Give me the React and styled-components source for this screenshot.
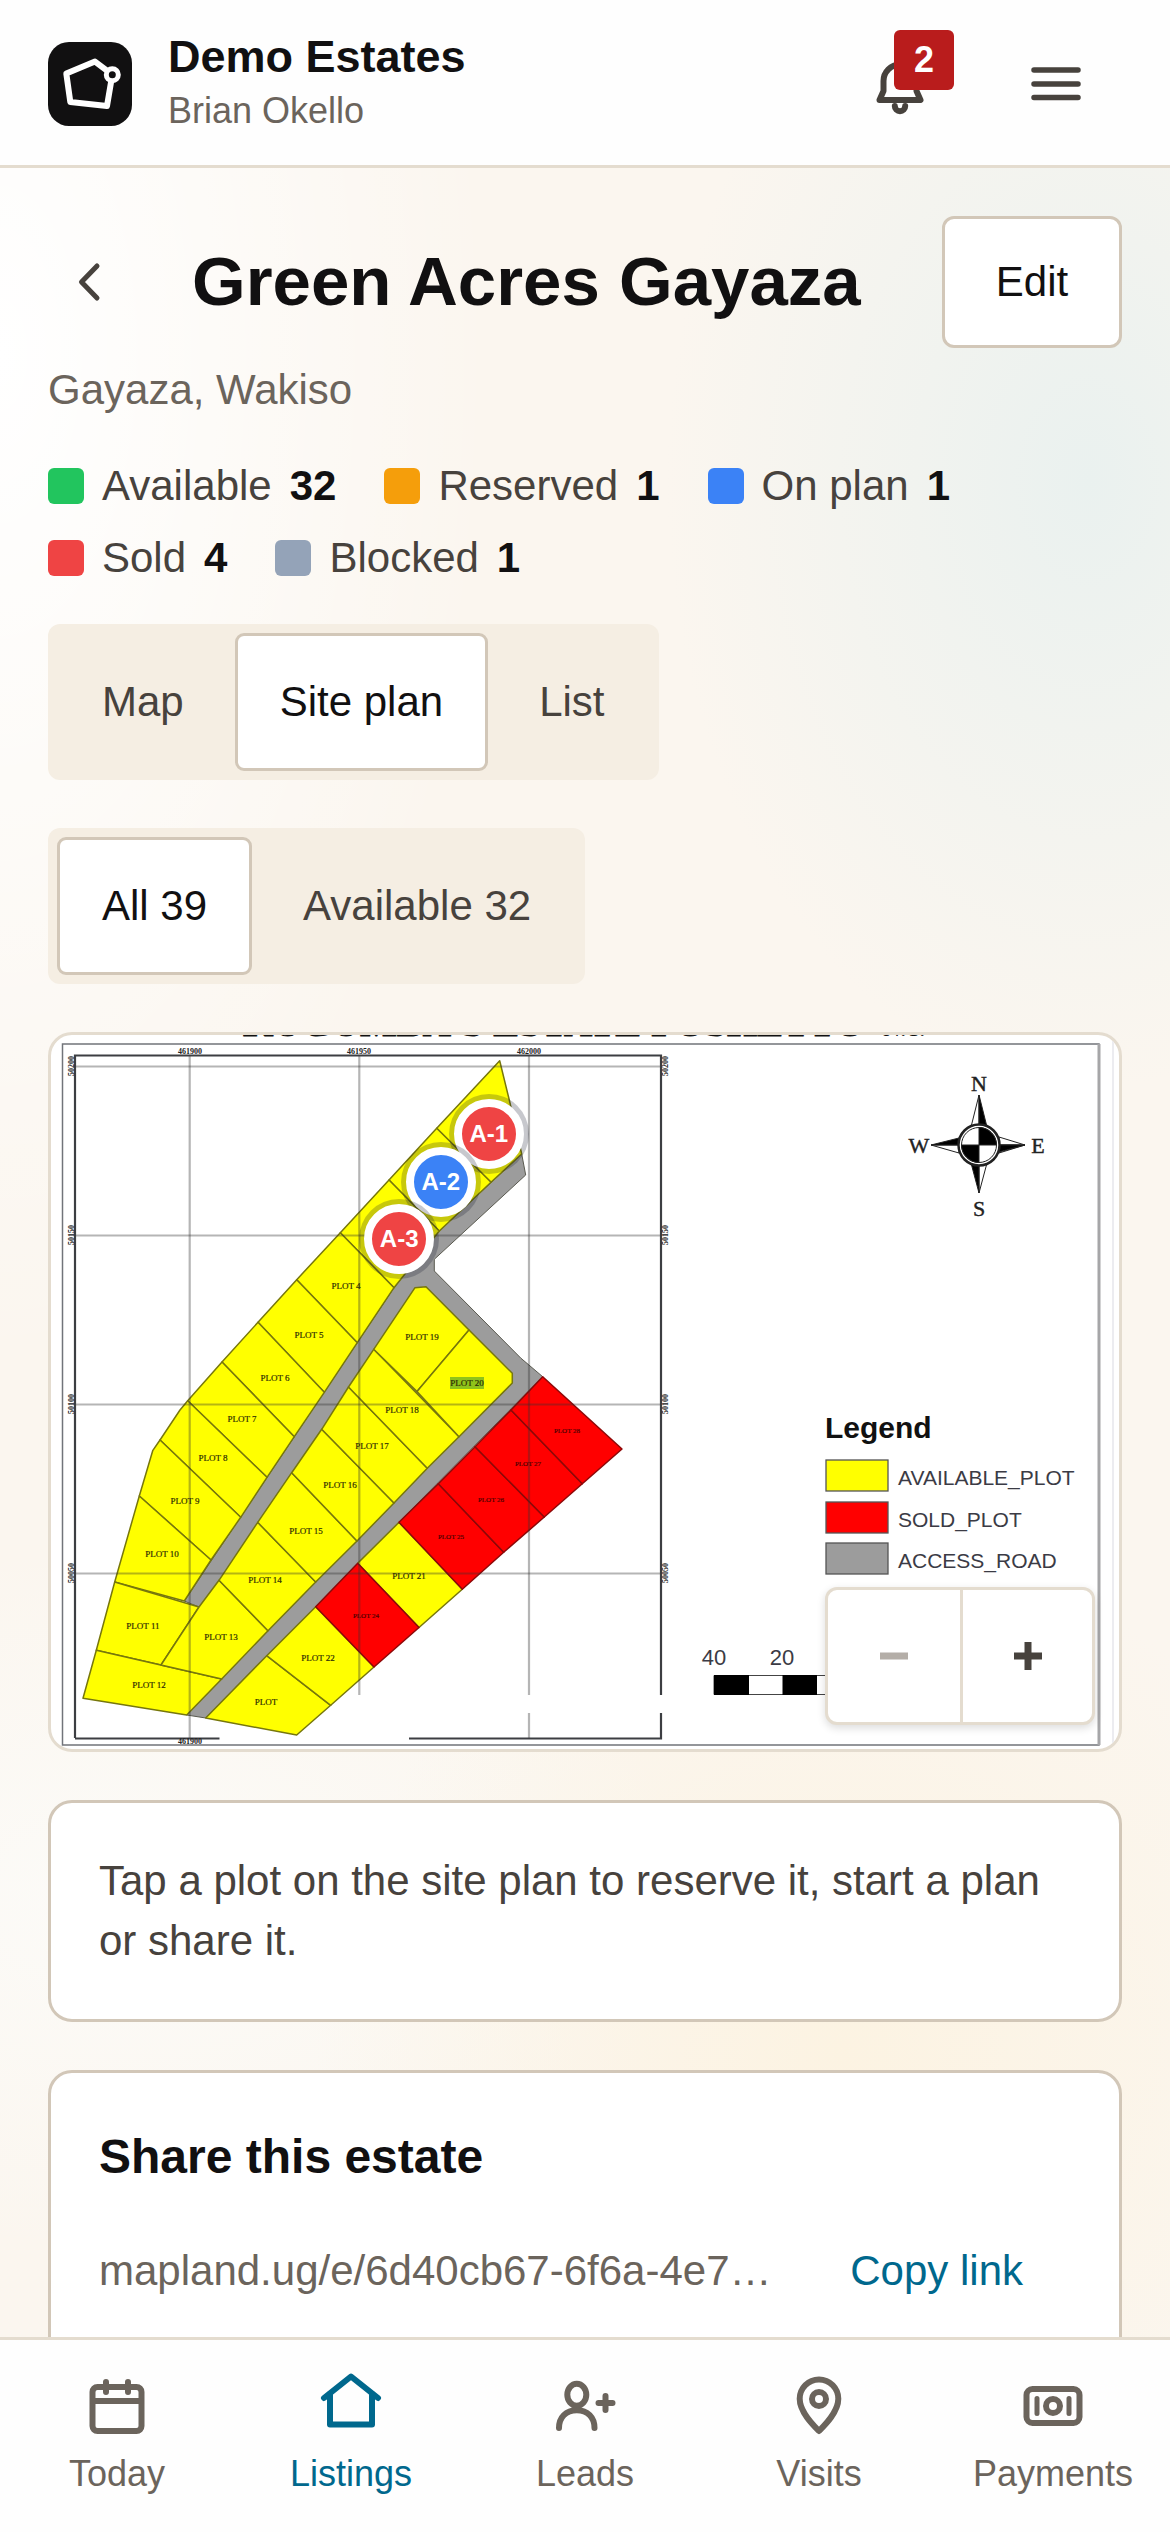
import React, { useState } from 'react'
import styled, { createGlobalStyle } from 'styled-components'

const colors = {
  ink: '#111011',
  text: '#47423d',
  muted: '#6b645c',
  link: '#00688d',
  line: '#e4dccf',
  cardLine: '#d2c7b8',
  sand: '#f5eee3',
  danger: '#b91c1c',
}

const GlobalStyle = createGlobalStyle`
  * { box-sizing: border-box; }
  body {
    margin: 0;
    background: #fbf7f0;
    color: ${colors.ink};
    font-family: "Liberation Sans", Arial, sans-serif;
    font-size: 42px;
    line-height: 60px;
  }
  button { font: inherit; color: inherit; cursor: pointer; }
  h1, h2, p, ul { margin: 0; padding: 0; }
`

// Data
const statuses = [
  { label: 'Available', count: 32, color: '#22c55e' },
  { label: 'Reserved', count: 1, color: '#f59e0b' },
  { label: 'On plan', count: 1, color: '#3b82f6' },
  { label: 'Sold', count: 4, color: '#ef4444' },
  { label: 'Blocked', count: 1, color: '#94a3b8' },
]

const markers = [
  { label: 'A-1', x: 41, y: 13.9, color: '#ef4444' },
  { label: 'A-2', x: 36.5, y: 20.6, color: '#3b82f6' },
  { label: 'A-3', x: 32.6, y: 28.6, color: '#ef4444' },
]

const yellowPlots = [
  '448.7,25.7 458.3,65 470.7,119 440,147.3 385.7,93.3',
  '385.7,93.3 440,147.3 388.3,196 338,145',
  '338,145 388.3,196 343,252.7 289.3,197.7',
  '289.3,197.7 343,252.7 306.3,307.7 245.7,244.7',
  '245.7,244.7 306.3,307.7 273.3,357.3 207,287.3',
  '207,287.3 273.3,357.3 243.3,401.7 171,327',
  '171,327 243.3,401.7 216,442.3 136.7,365.7',
  '136.7,365.7 216,442.3 189.7,482.3 109,405 129,375',
  '109,405 189.7,482.3 160,525 88.3,461 101.7,415.7',
  '88.3,461 160,525 133.3,566 63.7,547',
  '63.7,547 148,572 110,630 45.3,615.3',
  '45.3,615.3 170.7,644 135.7,680 32,663.3',
  '148,572 168,545.3 217,595.7 170.7,644 110,630',
  '168,545.3 206.7,487.3 264.7,547 217,595.7',
  '206.7,487.3 240.7,437.7 306,506 264.7,547',
  '240.7,437.7 270.7,394.3 343,468 306,506',
  '270.7,394.3 297.5,352 376.3,433.3 343,468',
  '297.5,352 322.7,314.3 408,401.7 376.3,433.3',
  '322.7,314.3 364,252.7 375,251.7 418,295 366,356.5',
  '418,295 461.3,338.3 461.3,348 408,401.7 366,356.5',
  '154.7,683 215.7,620.7 279.7,670.3 245.7,700',
  '215.7,620.7 264.7,571.7 323,632 279.7,670.3',
  '306.7,528.3 348,487.3 411.3,554.3 368,592.5',
]

const redPlots = [
  '264.7,571.7 306.7,528.3 368,592.5 323,632',
  '348,487.3 387.3,448.7 452.7,517.3 411.3,554.3',
  '387.3,448.7 424,411.7 493.3,482 452.7,517.3',
  '424,411.7 460,375 531.3,448.7 493.3,482',
  '460,375 491.7,341.7 571,414 531.3,448.7',
]

const plotLabels = [
  ['PLOT 4', 295, 254], ['PLOT 5', 258, 303], ['PLOT 6', 224, 346], ['PLOT 7', 191, 387],
  ['PLOT 8', 162, 426], ['PLOT 9', 134, 469], ['PLOT 10', 111, 522], ['PLOT 11', 92, 594],
  ['PLOT 12', 98, 653], ['PLOT 13', 170, 605], ['PLOT 14', 214, 548], ['PLOT 15', 255, 499],
  ['PLOT 16', 289, 453], ['PLOT 17', 321, 414], ['PLOT 18', 351, 378], ['PLOT 19', 371, 305],
  ['PLOT 20', 416, 351], ['PLOT 21', 358, 544], ['PLOT 22', 267, 626], ['PLOT', 215, 670],
]

const soldLabels = [
  ['PLOT 24', 315, 583], ['PLOT 25', 400, 504], ['PLOT 26', 440, 467],
  ['PLOT 27', 477, 431], ['PLOT 28', 516, 398],
]

const planLegend = [
  ['AVAILABLE_PLOT', '#ffff00', 425],
  ['SOLD_PLOT', '#ff0000', 467],
  ['ACCESS_ROAD', '#9c9c9c', 508],
]

// Shell
const Shell = styled.div`
  display: flex;
  flex-direction: column;
  height: 100vh;
  background:
    radial-gradient(ellipse 36% 24% at 93% 19%, #eaf1ef 0%, rgba(234, 241, 239, 0) 100%),
    radial-gradient(ellipse 42% 40% at 0% 14%, #ffffff 0%, rgba(255, 255, 255, 0) 100%),
    radial-gradient(ellipse 45% 20% at 72% 81%, #fcf3e2 0%, rgba(252, 243, 226, 0) 100%),
    radial-gradient(ellipse 50% 14% at 10% 75%, #fcfbf8 0%, rgba(252, 251, 248, 0) 100%),
    #fbf6ef;
`

const Header = styled.header`
  display: flex;
  align-items: center;
  gap: 24px;
  padding: 18px 48px 15px;
  background: #fefefe;
  border-bottom: 3px solid ${colors.line};
`

const Brand = styled.div`
  display: flex;
  align-items: center;
  gap: 36px;
  flex: 1;
  min-width: 0;
`

const BrandName = styled.p`
  font-size: 45px;
  font-weight: 700;
  line-height: 54px;
`

const BrandUser = styled.p`
  color: ${colors.muted};
  font-size: 36px;
  line-height: 54px;
`

const IconButton = styled.button`
  position: relative;
  display: flex;
  flex: none;
  align-items: center;
  justify-content: center;
  width: 132px;
  height: 132px;
  padding: 0;
  border: 0;
  background: none;
  color: ${colors.text};
`

const Badge = styled.span`
  position: absolute;
  top: 12px;
  right: 12px;
  width: 60px;
  height: 60px;
  border-radius: 6px;
  background: ${colors.danger};
  color: #fff;
  font-size: 36px;
  font-weight: 700;
  line-height: 60px;
  text-align: center;
`

const Content = styled.main`
  display: flex;
  flex: 1;
  flex-direction: column;
  gap: 48px;
  min-height: 0;
  padding: 48px;
  overflow-y: auto;
  scrollbar-width: none;
`

const Intro = styled.section`
  display: flex;
  flex: none;
  flex-direction: column;
  gap: 36px;
`

const TitleBlock = styled.div`
  display: flex;
  flex-direction: column;
  gap: 12px;
`

const TitleRow = styled.div`
  display: flex;
  align-items: center;
  gap: 36px;
  margin-left: -24px;
`

const Title = styled.h1`
  flex: 1;
  font-size: 69px;
  line-height: 84px;
  white-space: nowrap;
`

const EditButton = styled.button`
  min-width: 180px;
  height: 132px;
  padding: 0 48px;
  border: 3px solid ${colors.cardLine};
  border-radius: 12px;
  background: #fff;
`

const Place = styled.p`
  color: ${colors.muted};
`

const StatusList = styled.ul`
  display: flex;
  flex-wrap: wrap;
  gap: 12px 48px;
  list-style: none;
`

const Status = styled.li`
  display: flex;
  align-items: center;
  gap: 18px;
  color: ${colors.text};

  &::before {
    content: '';
    width: 36px;
    height: 36px;
    border-radius: 6px;
    background: ${p => p.$color};
  }

  strong { color: ${colors.ink}; }
`

const Segments = styled.div`
  display: flex;
  flex: none;
  align-self: flex-start;
  gap: 6px;
  padding: 9px;
  border-radius: 12px;
  background: ${colors.sand};
`

const Segment = styled.button`
  height: 138px;
  padding: 0 42px;
  border: 3px solid ${p => (p.$active ? colors.cardLine : 'transparent')};
  border-radius: 9px;
  background: ${p => (p.$active ? '#fff' : 'transparent')};
  color: ${p => (p.$active ? colors.ink : colors.text)};
`

// Site plan
const PlanCard = styled.section`
  position: relative;
  flex: none;
  overflow: hidden;
  border: 3px solid ${colors.line};
  border-radius: 24px;
  background: #fff;

  > svg {
    display: block;
    width: 100%;
    height: auto;
  }
`

const Marker = styled.button`
  position: absolute;
  left: ${p => p.$x}%;
  top: ${p => p.$y}%;
  width: 70px;
  height: 70px;
  padding: 0;
  border: 8px solid #fff;
  border-radius: 50%;
  background: ${p => p.$color};
  box-shadow: 0 0 0 5px rgba(20, 25, 45, 0.24);
  color: #fff;
  font-size: 24px;
  font-weight: 700;
  line-height: 54px;
  transform: translate(-50%, -50%);
`

const ZoomControl = styled.div`
  position: absolute;
  right: 24px;
  bottom: 24px;
  display: flex;
  overflow: hidden;
  border: 3px solid ${colors.line};
  border-radius: 12px;
  background: #fff;
  box-shadow: 0 3px 9px rgba(0, 0, 0, 0.14);
`

const ZoomButton = styled(IconButton)`
  & + & { border-left: 3px solid ${colors.line}; }
  &:disabled { color: #b4aea8; }
`

// Cards
const Card = styled.section`
  flex: none;
  padding: 48px;
  border: 3px solid ${colors.cardLine};
  border-radius: 24px;
  background: #fff;
`

const Hint = styled.p`
  color: ${colors.text};
`

const CardTitle = styled.h2`
  font-size: 48px;
  line-height: 72px;
`

const ShareRow = styled.div`
  display: flex;
  align-items: center;
  gap: 24px;
  margin-top: 12px;
`

const ShareUrl = styled.span`
  flex: 1;
  min-width: 0;
  overflow: hidden;
  color: ${colors.muted};
  text-overflow: ellipsis;
  white-space: nowrap;
`

const CopyButton = styled.button`
  height: 132px;
  padding: 0 48px;
  border: 0;
  background: none;
  color: ${colors.link};
`

// Bottom navigation
const TabBar = styled.nav`
  display: grid;
  flex: none;
  grid-template-columns: repeat(5, 1fr);
  border-top: 3px solid ${colors.line};
  background: #fefefe;
`

const Tab = styled.a`
  display: flex;
  flex-direction: column;
  align-items: center;
  gap: 8px;
  padding: 30px 0 34px;
  color: ${p => (p.$active ? colors.link : colors.muted)};
  font-size: 36px;
  line-height: 48px;
  text-decoration: none;
`

const Icon = ({ children, stroke = 6 }) => (
  <svg width="72" height="72" viewBox="0 0 72 72" fill="none" stroke="currentColor"
    strokeWidth={stroke} strokeLinecap="round" strokeLinejoin="round" aria-hidden="true">
    {children}
  </svg>
)

const Logo = () => (
  <svg width="84" height="84" viewBox="0 0 84 84" fill="none" stroke="#fff" strokeWidth="6" strokeLinejoin="round" aria-hidden="true">
    <rect width="84" height="84" rx="21" fill={colors.ink} stroke="none" />
    <path d="M64.3 32.7 L47 19.6 L18.3 31.5 L22.3 60 L59 64 Z" />
    <circle cx="64.3" cy="32.7" r="6" fill={colors.ink} strokeWidth="5" />
  </svg>
)

const tabs = [
  {
    label: 'Today',
    icon: <><rect x="11.5" y="17" width="49" height="44" rx="5" /><path d="M12 31H60M25 12V22M47 12V22" /></>,
  },
  {
    label: 'Listings',
    icon: <><path d="M9 28L36 6.500L63 28" /><path d="M15 24V54.500H57V24" /></>,
  },
  {
    label: 'Leads',
    icon: <><ellipse cx="27.800" cy="24.700" rx="9.500" ry="11" /><path d="M10 58C10 47 17 40.300 27.800 40.300S45.500 47 45.500 58M56.500 26V40M49.500 33H63.500" /></>,
  },
  {
    label: 'Visits',
    icon: <><path d="M36 61C30 55 16.700 42 16.700 28.800A19.300 19.300 0 0 1 55.300 28.800C55.300 42 42 55 36 61Z" /><circle cx="36" cy="29" r="7" /></>,
  },
  {
    label: 'Payments',
    icon: <><rect x="9.500" y="19" width="53" height="34" rx="6" /><circle cx="36" cy="36" r="7" /><path d="M20 28.500V43.500M52 28.500V43.500" strokeWidth="5" /></>,
  },
]

const SitePlan = () => (
  <svg viewBox="0 0 1068 714" role="img" aria-label="Site plan">
    <g fontFamily="Liberation Serif, serif" fill="#111">
      <text x="192" y="1" fontSize="39" fontWeight="700" stroke="#111" strokeWidth="1">KUGUMBA'S ESTATE POSHETTO</text>
      <text x="832" y="1" fontSize="24">N.T.</text>
    </g>
    <path d="M11.500 9H1048V710H11.500Z" fill="none" stroke="#71747a" strokeWidth="1.500" />
    <path d="M1048 9V710" stroke="#a6a6a8" strokeWidth="3" />
    <path d="M1062 6V710" stroke="#ececf0" strokeWidth="2" />

    <polygon points="470.7,119 474.7,140 383.3,224.3 383.3,236 470,323.3 491.7,341.7 154.7,683 135.7,680 148,572 133.3,566 343,252.7 388.3,196"
      fill="#9c9c9c" stroke="#5a5a50" strokeWidth="1" />
    <g fill="#ffff00" stroke="#77770c" strokeWidth="1.500" strokeLinejoin="round">
      {yellowPlots.map(points => <polygon key={points} points={points} />)}
    </g>
    <g fill="#ff0000" stroke="#8d0808" strokeWidth="1.500" strokeLinejoin="round">
      {redPlots.map(points => <polygon key={points} points={points} />)}
    </g>

    <g fill="none" stroke="#333" strokeOpacity="0.36" strokeWidth="2.200">
      <path d="M24 31.500H610M24 200.500H610M24 369.500H610M24 538.500H610" />
      <path d="M138.700 20V703M308.300 20V660M478 20V660M478 678V703" />
    </g>
    <path d="M24 703V20.500H610V660M610 678V703.500H358M168.500 703.500H24" fill="none" stroke="#3c3e42" strokeWidth="2.200" />

    <g fontFamily="Liberation Serif, serif" fontSize="8" fontWeight="700" fill="#222" textAnchor="middle">
      <text x="139" y="19">461900</text>
      <text x="308" y="19">461950</text>
      <text x="478" y="19">462000</text>
      <text x="139" y="709">461900</text>
      {[31, 200, 369, 538].map((y, i) => (
        <React.Fragment key={y}>
          <text transform={`translate(23 ${y}) rotate(-90)`}>{50200 - i * 50}</text>
          <text transform={`translate(617 ${y}) rotate(-90)`}>{50200 - i * 50}</text>
        </React.Fragment>
      ))}
    </g>

    <rect x="399" y="342" width="34" height="12" fill="#8fc31a" />
    <g fontFamily="Liberation Serif, serif" fontSize="9" fill="#2c2c05" stroke="#2c2c05" strokeWidth="0.200" textAnchor="middle">
      {plotLabels.map(([label, x, y]) => <text key={label} x={x} y={y}>{label}</text>)}
    </g>
    <g fontFamily="Liberation Serif, serif" fontSize="7" fill="#4a0000" stroke="#4a0000" strokeWidth="0.200" textAnchor="middle">
      {soldLabels.map(([label, x, y]) => <text key={label} x={x} y={y}>{label}</text>)}
    </g>

    {/* compass */}
    <g stroke="#222" strokeWidth="1">
      <path d="M928 60L920 92H928ZM974 110L948 118V110ZM974 110L948 102V110ZM928 158L936 128H928ZM880 110L908 118V110Z" fill="#fff" />
      <path d="M928 60L936 92H928ZM974 110L948 117V110ZM928 158L920 128H928ZM880 110L908 103V110Z" fill="#000" />
      <circle cx="928" cy="110" r="20.500" fill="#fff" strokeWidth="2.500" />
      <circle cx="928" cy="110" r="17.500" fill="#fff" />
      <path d="M928 110V92.500A17.500 17.500 0 0 1 945.500 110ZM928 110V127.500A17.500 17.500 0 0 1 910.500 110Z" fill="#000" />
    </g>
    <g fontFamily="Liberation Serif, serif" fontSize="22" fill="#222" stroke="#222" strokeWidth="0.400" textAnchor="middle">
      <text x="928" y="56">N</text>
      <text x="928" y="181">S</text>
      <text x="868" y="118">W</text>
      <text x="987" y="118">E</text>
    </g>

    <g fontFamily="Liberation Sans, sans-serif" fontSize="21" fill="#3b3b45">
      <text x="774" y="403" fontSize="30" fontWeight="700" fill="#111">Legend</text>
      {planLegend.map(([label, fill, y]) => (
        <React.Fragment key={label}>
          <rect x="775" y={y} width="62" height="31" fill={fill} stroke="#555" strokeWidth="1.300" />
          <text x="847" y={y + 25}>{label}</text>
        </React.Fragment>
      ))}
      <text x="663" y="630" fontSize="22" textAnchor="middle">40</text>
      <text x="731" y="630" fontSize="22" textAnchor="middle">20</text>
    </g>
    <path d="M663 640.500H800V659.500H663Z" fill="#fff" stroke="#444" strokeWidth="1" />
    <path d="M663 640H698V660H663ZM731.500 640H766V660H731.500Z" fill="#000" />
  </svg>
)

const App = () => {
  const [view, setView] = useState('Site plan')
  const [filter, setFilter] = useState('All 39')

  return (
    <Shell>
      <GlobalStyle />
      <Header>
        <Brand>
          <Logo />
          <div>
            <BrandName>Demo Estates</BrandName>
            <BrandUser>Brian Okello</BrandUser>
          </div>
        </Brand>
        <IconButton type="button" aria-label="Notifications">
          <Icon>
            <path d="M19.500 33A16.500 16.500 0 0 1 52.500 33V43L56.500 52H15.500L19.500 43Z" />
            <path d="M30.800 58A5.200 5.200 0 0 0 41.200 58" />
          </Icon>
          <Badge>2</Badge>
        </IconButton>
        <IconButton type="button" aria-label="Menu">
          <Icon stroke={5.5}><path d="M14 22H58M14 36H58M14 49.500H58" /></Icon>
        </IconButton>
      </Header>

      <Content>
        <Intro>
          <TitleBlock>
            <TitleRow>
              <IconButton type="button" aria-label="Back">
                <Icon stroke={5}><path d="M43 20L27.500 36L43 52" /></Icon>
              </IconButton>
              <Title>Green Acres Gayaza</Title>
              <EditButton type="button">Edit</EditButton>
            </TitleRow>
            <Place>Gayaza, Wakiso</Place>
          </TitleBlock>
          <StatusList>
            {statuses.map(s => (
              <Status key={s.label} $color={s.color}>
                <span>{s.label}</span>
                <strong>{s.count}</strong>
              </Status>
            ))}
          </StatusList>
          <Segments>
            {['Map', 'Site plan', 'List'].map(item => (
              <Segment key={item} type="button" $active={item === view} aria-pressed={item === view} onClick={() => setView(item)}>
                {item}
              </Segment>
            ))}
          </Segments>
        </Intro>

        <Segments>
          {['All 39', 'Available 32'].map(item => (
            <Segment key={item} type="button" $active={item === filter} aria-pressed={item === filter} onClick={() => setFilter(item)}>
              {item}
            </Segment>
          ))}
        </Segments>

        <PlanCard>
          <SitePlan />
          {markers.map(m => (
            <Marker key={m.label} type="button" $x={m.x} $y={m.y} $color={m.color}>{m.label}</Marker>
          ))}
          <ZoomControl>
            <ZoomButton type="button" aria-label="Zoom out" disabled>
              <svg width="28" height="28" viewBox="0 0 28 28" fill="currentColor"><path d="M0 10.500H28V17.500H0Z" /></svg>
            </ZoomButton>
            <ZoomButton type="button" aria-label="Zoom in">
              <svg width="28" height="28" viewBox="0 0 28 28" fill="currentColor"><path d="M0 10.500H10.500V0H17.500V10.500H28V17.500H17.500V28H10.500V17.500H0Z" /></svg>
            </ZoomButton>
          </ZoomControl>
        </PlanCard>

        <Card>
          <Hint>Tap a plot on the site plan to reserve it, start a plan or share it.</Hint>
        </Card>

        <Card>
          <CardTitle>Share this estate</CardTitle>
          <ShareRow>
            <ShareUrl>mapland.ug/e/6d40cb67-6f6a-4e7…</ShareUrl>
            <CopyButton type="button">Copy link</CopyButton>
          </ShareRow>
        </Card>
      </Content>

      <TabBar>
        {tabs.map(tab => (
          <Tab key={tab.label} href="#" $active={tab.label === 'Listings'}>
            <Icon>{tab.icon}</Icon>
            {tab.label}
          </Tab>
        ))}
      </TabBar>
    </Shell>
  )
}

export default App
